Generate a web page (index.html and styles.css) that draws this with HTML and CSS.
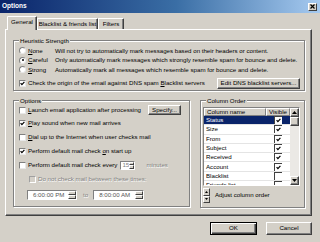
FILE: index.html
```html
<!DOCTYPE html>
<html>
<head>
<meta charset="utf-8">
<title>Options</title>
<link rel="stylesheet" href="styles.css">
</head>
<body>
<div class="titlebar">
  <span class="title">Options</span>
  <span class="close"><svg width="5" height="5" viewBox="0 0 5 5"><path d="M0.5 0.5 4.5 4.5 M4.5 0.5 0.5 4.5" stroke="#000" stroke-width="1.2"/></svg></span>
</div>
<div class="main">
  <div class="tabs">
    <div class="tab tab-general active">General</div>
    <div class="tab tab-black">Blacklist &amp; friends list</div>
    <div class="tab tab-filters">Filters</div>
  </div>
  <div class="panel">
    <div class="group heur">
      <span class="legend">Heuristic Strength</span>
      <div class="radio-row"><span class="radio"></span><span class="rlabel"><u>N</u>one</span><span class="desc">Will not try to automatically mark messages based on their headers or content.</span></div>
      <div class="radio-row"><span class="radio on"></span><span class="rlabel"><u>C</u>areful</span><span class="desc">Only automatically mark messages which strongly resemble spam for bounce and delete.</span></div>
      <div class="radio-row"><span class="radio"></span><span class="rlabel"><u>S</u>trong</span><span class="desc">Automatically mark all messages which resemble spam for bounce and delete.</span></div>
      <div class="dns-row"><span class="cb"><svg class="tick" viewBox="0 0 5 5"><path d="M0.6 2.2 1.9 3.6 4.4 0.9" fill="none" stroke="#000" stroke-width="1.2"/></svg></span><span>Check the origin of the email against DNS spam <u>B</u>lacklist servers</span><span class="btn dnsbtn">Edit DNS blacklist servers...</span></div>
    </div>
    <div class="lower">
      <div class="group opts">
        <span class="legend">Options</span>
        <div class="opt-row first"><span class="cb"></span><span><u>L</u>aunch email application after processing</span><span class="btn specify">Specify...</span></div>
        <div class="opt-row"><span class="cb"><svg class="tick" viewBox="0 0 5 5"><path d="M0.6 2.2 1.9 3.6 4.4 0.9" fill="none" stroke="#000" stroke-width="1.2"/></svg></span><span><u>P</u>lay sound when new mail arrives</span></div>
        <div class="opt-row"><span class="cb"></span><span><u>D</u>ial up to the Internet when user checks mail</span></div>
        <div class="opt-row"><span class="cb"><svg class="tick" viewBox="0 0 5 5"><path d="M0.6 2.2 1.9 3.6 4.4 0.9" fill="none" stroke="#000" stroke-width="1.2"/></svg></span><span>Perform default mail check <u>o</u>n start up</span></div>
        <div class="opt-row"><span class="cb"></span><span>Perform default mail check every</span><span class="spinedit"><span class="val">15</span><span class="spin"><span class="up"></span><span class="dn"></span></span></span><span class="disabled minutes">minutes</span></div>
        <div class="opt-row indent"><span class="cb dis"></span><span class="disabled">Do not check mail between these times:</span></div>
        <div class="opt-row times"><span class="timebox"><span class="tval">6:00:00 PM</span><span class="spin"><span class="up"></span><span class="dn"></span></span></span><span class="to disabled">to</span><span class="timebox wide"><span class="tval">8:00:00 AM</span><span class="spin"><span class="up"></span><span class="dn"></span></span></span></div>
      </div>
      <div class="group cols">
        <span class="legend">Column Order</span>
        <div class="listbox">
          <div class="table">
            <div class="thead"><span class="th name">Column name</span><span class="th vis">Visible</span></div>
            <div class="rows">
              <div class="tr sel"><span class="td name">Status</span><span class="td vis"><span class="lcb"><svg class="tick" viewBox="0 0 5 5"><path d="M0.6 2.2 1.9 3.6 4.4 0.9" fill="none" stroke="#000" stroke-width="1.2"/></svg></span></span></div>
              <div class="tr"><span class="td name">Size</span><span class="td vis"><span class="lcb"><svg class="tick" viewBox="0 0 5 5"><path d="M0.6 2.2 1.9 3.6 4.4 0.9" fill="none" stroke="#000" stroke-width="1.2"/></svg></span></span></div>
              <div class="tr"><span class="td name">From</span><span class="td vis"><span class="lcb"><svg class="tick" viewBox="0 0 5 5"><path d="M0.6 2.2 1.9 3.6 4.4 0.9" fill="none" stroke="#000" stroke-width="1.2"/></svg></span></span></div>
              <div class="tr"><span class="td name">Subject</span><span class="td vis"><span class="lcb"><svg class="tick" viewBox="0 0 5 5"><path d="M0.6 2.2 1.9 3.6 4.4 0.9" fill="none" stroke="#000" stroke-width="1.2"/></svg></span></span></div>
              <div class="tr"><span class="td name">Received</span><span class="td vis"><span class="lcb"><svg class="tick" viewBox="0 0 5 5"><path d="M0.6 2.2 1.9 3.6 4.4 0.9" fill="none" stroke="#000" stroke-width="1.2"/></svg></span></span></div>
              <div class="tr"><span class="td name">Account</span><span class="td vis"><span class="lcb"><svg class="tick" viewBox="0 0 5 5"><path d="M0.6 2.2 1.9 3.6 4.4 0.9" fill="none" stroke="#000" stroke-width="1.2"/></svg></span></span></div>
              <div class="tr"><span class="td name">Blacklist</span><span class="td vis"><span class="lcb"></span></span></div>
              <div class="tr"><span class="td name">Friends list</span><span class="td vis"><span class="lcb"></span></span></div>
            </div>
          </div>
          <div class="scrollbar">
            <span class="sbtn"><svg width="5" height="3" viewBox="0 0 5 3"><path d="M2.5 0 5 3 0 3z" fill="#000"/></svg></span>
            <span class="thumb"></span>
            <span class="track"></span>
            <span class="sbtn"><svg width="5" height="3" viewBox="0 0 5 3"><path d="M0 0 5 0 2.5 3z" fill="#000"/></svg></span>
          </div>
        </div>
        <div class="adjust">
          <span class="vspin"><span class="vb"><svg width="3" height="2" viewBox="0 0 3 2"><path d="M1.5 0 3 2 0 2z" fill="#000"/></svg></span><span class="vb"><svg width="3" height="2" viewBox="0 0 3 2"><path d="M0 0 3 0 1.5 2z" fill="#000"/></svg></span></span>
          <span>Adjust column order</span>
        </div>
      </div>
    </div>
  </div>
  <div class="buttons">
    <span class="btn ok">OK</span>
    <span class="btn cancel">Cancel</span>
  </div>
</div>
</body>
</html>
```
FILE: styles.css
```css
* { box-sizing: border-box; }
html, body { margin: 0; padding: 0; }
body {
  width: 320px; height: 242px; overflow: hidden;
  background: #d4d0c8;
  font-family: "Liberation Sans", Arial, sans-serif;
  font-size: 6.15px; line-height: 1; color: #000;
}
u { text-decoration-thickness: 0.5px; text-underline-offset: 1px; }

.titlebar {
  height: 13px;
  background: linear-gradient(to right, #0a246a 0%, #3a6ea5 55%, #a6caf0 100%);
  display: flex; align-items: center; justify-content: space-between;
  padding: 0 3px 0 2px;
}
.title { color: #fff; font-weight: bold; font-size: 6.5px; }
.close {
  width: 9px; height: 8px; background: #d4d0c8;
  border: 1px solid; border-color: #fff #404040 #404040 #fff;
  display: flex; align-items: center; justify-content: center;
}

.main { padding: 3px 8px 0 5px; }

.tabs { display: flex; align-items: flex-end; height: 13px; padding-left: 2px; }
.tab {
  height: 11px; display: flex; align-items: center; justify-content: center;
  border: 1px solid; border-bottom: none;
  border-color: #fff #404040 transparent #fff;
  box-shadow: inset -1px 0 0 #808080;
  border-radius: 1px 1px 0 0;
  white-space: nowrap;
}
.tab.active { height: 14px; margin-bottom: -1px; position: relative; z-index: 1; background: #d4d0c8; padding-bottom: 2px; }
.tab-general { width: 30px; }
.tab-black { width: 61px; }
.tab-filters { width: 26px; }

.panel {
  height: 187px;
  border: 1px solid; border-color: #fff #404040 #404040 #fff;
  box-shadow: inset -1px -1px 0 #808080;
  padding: 10px 6px 0 7px;
}

.group {
  position: relative;
  border: 1px solid #808080;
  box-shadow: 1px 1px 0 #fff, inset 1px 1px 0 #fff;
}
.legend {
  position: absolute; top: -4px; left: 5px;
  background: #d4d0c8; padding: 0 1px; line-height: 7px;
}

.heur { height: 51px; padding: 5px 4px 0 5px; }
.radio-row { display: flex; align-items: center; height: 9.5px; white-space: nowrap; }
.radio {
  width: 7px; height: 7px; border-radius: 50%; background: #fff;
  border: 1px solid; border-color: #808080 #e8e8e8 #e8e8e8 #808080;
  margin-right: 2px; flex: none; position: relative;
}
.radio.on::after {
  content: ""; position: absolute; left: 1.5px; top: 1.5px;
  width: 2px; height: 2px; border-radius: 50%; background: #000;
}
.rlabel { width: 27px; flex: none; }

.dns-row { display: flex; align-items: center; height: 12px; margin-top: 3px; white-space: nowrap; }
.cb {
  width: 7px; height: 7px; background: #fff; flex: none;
  border: 1px solid; border-color: #808080 #e8e8e8 #e8e8e8 #808080;
  margin-right: 2px; display: inline-flex; align-items: center; justify-content: center;
}
.cb.dis { background: #d4d0c8; border-color: #a0a0a0 #fff #fff #a0a0a0; }
.tick { width: 5px; height: 5px; display: block; }

.btn {
  display: inline-flex; align-items: center; justify-content: center;
  background: #d4d0c8; white-space: nowrap;
  border: 1px solid; border-color: #fff #404040 #404040 #fff;
  box-shadow: inset -1px -1px 0 #808080;
}
.dnsbtn { margin-left: auto; width: 83px; height: 11px; }

.lower {
  display: grid; grid-template-columns: 177px 105px; column-gap: 10px;
  margin-top: 9px;
}
.opts { height: 107px; padding: 3px 8px 0 5px; }
.opt-row { display: flex; align-items: center; height: 14px; white-space: nowrap; }
.opt-row.first { height: 12px; }
.opt-row.indent { padding-left: 10px; }
.opt-row.times { padding-left: 8px; height: 16px; padding-top: 2px; }
.specify { margin-left: auto; width: 33px; height: 10px; }
.disabled { color: #808080; text-shadow: 0.5px 0.5px 0 #fff; }
.minutes { margin-left: 11px; }

.spinedit {
  margin-left: 3px; width: 15px; height: 9px; background: #fff;
  border: 1px solid; border-color: #808080 #fff #fff #808080;
  display: flex; align-items: stretch; justify-content: space-between;
}
.val { color: #808080; padding-left: 1px; display: flex; align-items: center; }
.spin { width: 6px; display: flex; flex-direction: column; }
.spin .up, .spin .dn {
  flex: 1; background: #d4d0c8;
  border: 0.5px solid; border-color: #fff #404040 #404040 #fff;
}
.timebox {
  width: 50px; height: 10px; background: #fff;
  border: 1px solid; border-color: #808080 #fff #fff #808080;
  display: flex; justify-content: space-between; align-items: stretch;
}
.timebox.wide { width: 51px; }
.tval { color: #555; padding-left: 5px; display: flex; align-items: center; }
.timebox .spin { width: 8px; }
.to { margin: 0 5px 0 6px; }

.cols { height: 108px; padding: 6px 4px 0 2px; }
.listbox {
  height: 79px; background: #fff; display: flex;
  border: 1px solid; border-color: #808080 #fff #fff #808080;
  overflow: hidden;
}
.table { flex: 1; display: flex; flex-direction: column; overflow: hidden; }
.thead { display: flex; height: 8px; flex: none; }
.th {
  background: #d4d0c8; display: flex; align-items: center;
  border: 1px solid; border-color: #fff #808080 #808080 #fff;
}
.th.name { width: 62px; padding-left: 2px; }
.th.vis { flex: 1; padding-left: 2px; }
.rows { flex: 1; overflow: hidden; }
.tr { display: flex; height: 9.3px; border-bottom: 1px solid #e4e4e4; }
.tr.sel { background: #0a246a; color: #fff; }
.td { display: flex; align-items: center; }
.td.name { width: 62px; padding-left: 2px; }
.td.vis { flex: 1; padding-left: 8px; }
.lcb {
  width: 8px; height: 8px; background: #fff;
  border-left: 1px solid #404040; border-top: 1px solid #404040;
  display: flex; align-items: center; justify-content: center;
}
.scrollbar {
  width: 9px; flex: none; display: flex; flex-direction: column;
  background: #ebe9e5;
}
.sbtn, .thumb {
  height: 9px; flex: none; background: #d4d0c8;
  border: 1px solid; border-color: #fff #404040 #404040 #fff;
  box-shadow: inset -1px -1px 0 #808080;
  display: flex; align-items: center; justify-content: center;
}
.track { flex: 1; }

.adjust { display: flex; align-items: center; margin-top: 2px; white-space: nowrap; }
.vspin { width: 7px; height: 15px; display: flex; flex-direction: column; margin-right: 5px; }
.vb {
  flex: 1; background: #d4d0c8;
  border: 1px solid; border-color: #fff #404040 #404040 #fff;
  display: flex; align-items: center; justify-content: center;
}

.buttons { display: flex; justify-content: flex-end; gap: 9px; margin-top: 6px; }
.ok, .cancel { height: 13px; }
.ok { width: 47px; border-color: #000; box-shadow: inset 1px 1px 0 #fff, inset -1px -1px 0 #404040, inset -2px -2px 0 #808080; }
.cancel { width: 46px; }
```
